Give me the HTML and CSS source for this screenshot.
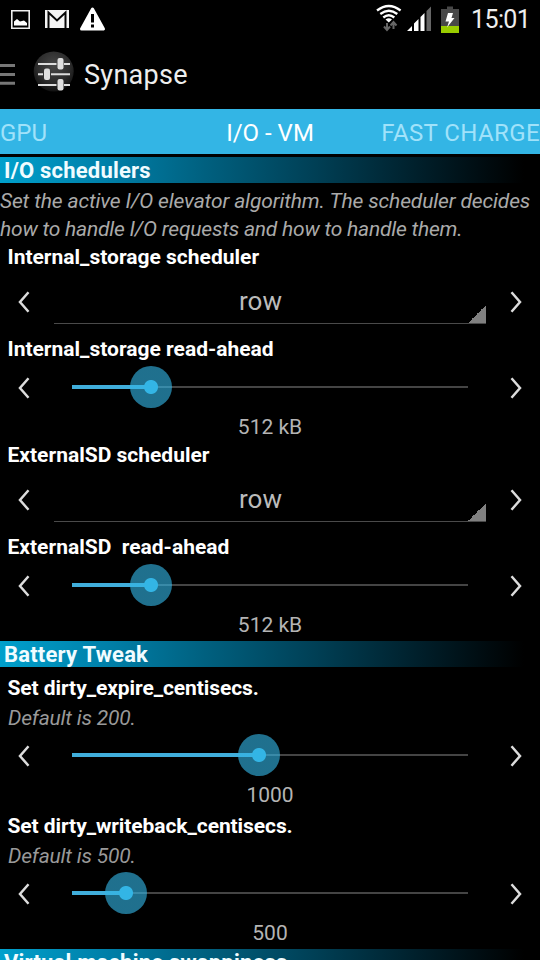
FILE: index.html
```
<!DOCTYPE html>
<html lang="en">
<head>
<meta charset="utf-8">
<title>Synapse</title>
<link rel="stylesheet" href="styles.css">
</head>
<body>
<svg class="defs" width="0" height="0">
  <symbol id="left" viewBox="0 0 12 22"><path d="M10.500 1.300 2 11 10.500 20.700" fill="none" stroke="#dcdcdc" stroke-width="2.500"/></symbol>
  <symbol id="right" viewBox="0 0 12 22"><path d="M1.500 1.300 10 11 1.500 20.700" fill="none" stroke="#dcdcdc" stroke-width="2.500"/></symbol>
</svg>
<div class="screen">
  <div class="status">
    <svg width="110" height="38" viewBox="0 0 110 38">
      <path d="M11.800 10.800H29.200V28.200H11.800Z" fill="none" stroke="#eee" stroke-width="1.600"/>
      <path d="M14 25.500V21.500L17 19L20 21.500L24 20.500L27 23V25.500Z" fill="#fff"/>
      <path d="M45 10H69V28H45Z" fill="#f4f4f4"/>
      <path d="M48.500 28V12.500L57 20.500L65.500 12.500V28" fill="none" stroke="#050505" stroke-width="2"/>
      <path d="M92.500 9 103.500 29H81.500Z" fill="#fff" stroke="#fff" stroke-width="3" stroke-linejoin="round"/>
      <path d="M92.500 14V22.500M92.500 24.500V27.500" stroke="#000" stroke-width="3"/>
    </svg>
    <svg class="signals" width="90" height="38" viewBox="370 0 90 38">
      <g fill="none" stroke="#fff" stroke-width="2.300">
        <path d="M377 10.500Q388.800 1.500 400.600 10.500"/>
        <path d="M380.300 14Q388.800 7.500 397.300 14"/>
        <path d="M383.300 17.500Q388.800 13 394.300 17.500"/>
      </g>
      <path d="M385.500 19.500Q388.800 17 392 19.500L388.800 22.500Z" fill="#fff"/>
      <path d="M387 23V30M384 26.500 387 30 390 26.500M393.500 29V22M390.500 25.500 393.500 22 396.500 25.500" fill="none" stroke="#666" stroke-width="2"/>
      <path d="M407 31 412 26V31ZM414 31V23.500L418.500 19V31ZM420.500 31V17L424.500 13V31Z" fill="#fff"/>
      <path d="M426.500 31V11L431 6.500V31Z" fill="#666"/>
      <path d="M441 9H447V6.500H453V9H459V26H441Z" fill="#484848"/>
      <path d="M441 26H459V33H441Z" fill="#9c0"/>
      <path d="M448 13H453L451.500 18H454.500L447 27.500L449 21.500H445.500Z" fill="#fff"/>
    </svg>
    <span class="clock">15:01</span>
  </div>
  <div class="actionbar">
    <svg width="78" height="70" viewBox="0 38 78 70">
      <defs><radialGradient id="ball" cx=".5" cy=".35" r=".65"><stop offset="0" stop-color="#484848"/><stop offset=".65" stop-color="#2b2b2b"/><stop offset="1" stop-color="#111"/></radialGradient></defs>
      <path d="M0 65.500H15M0 74.500H15M0 83.300H15" stroke="#777" stroke-width="3"/>
      <circle cx="53.700" cy="71.500" r="20" fill="url(#ball)"/>
      <path d="M38 64H56.500M64 64H70M38 74.300H43M51 74.300H70M38 85H56.500M64 85H70" stroke="#ddd" stroke-width="2"/>
      <g fill="#dedede"><rect x="57.500" y="58" width="6" height="11.500" rx="2"/><rect x="44" y="68.500" width="6" height="11.500" rx="2"/><rect x="57.500" y="79" width="6" height="11.500" rx="2"/></g>
    </svg>
    <h1>Synapse</h1>
  </div>
  <nav class="tabs"><span class="t1">GPU</span><span class="t2">I/O - VM</span><span class="t3">FAST CHARGE</span></nav>

  <h2><span class="h-io">I/O schedulers</span></h2>
  <p class="desc"><span class="d1">Set the active I/O elevator algorithm. The scheduler decides</span><br><span class="d2">how to handle I/O requests and how to handle them.</span></p>

  <h3><span>Internal_storage scheduler</span></h3>
  <div class="row spin-row">
    <svg class="arrow"><use href="#left"/></svg>
    <div class="spinner"><span>row</span></div>
    <svg class="arrow"><use href="#right"/></svg>
  </div>
  <h3><span>Internal_storage read-ahead</span></h3>
  <div class="row">
    <svg class="arrow"><use href="#left"/></svg>
    <div class="track"><div class="fill" style="width:19.900%"><i class="thumb"></i></div></div>
    <svg class="arrow"><use href="#right"/></svg>
  </div>
  <div class="value">512 kB</div>

  <h3><span>ExternalSD scheduler</span></h3>
  <div class="row spin-row">
    <svg class="arrow"><use href="#left"/></svg>
    <div class="spinner"><span>row</span></div>
    <svg class="arrow"><use href="#right"/></svg>
  </div>
  <h3><span>ExternalSD&nbsp; read-ahead</span></h3>
  <div class="row">
    <svg class="arrow"><use href="#left"/></svg>
    <div class="track"><div class="fill" style="width:19.900%"><i class="thumb"></i></div></div>
    <svg class="arrow"><use href="#right"/></svg>
  </div>
  <div class="value">512 kB</div>

  <h2><span>Battery Tweak</span></h2>
  <section class="tweak first">
    <h3><span>Set dirty_expire_centisecs.</span></h3>
    <p class="default"><span>Default is 200.</span></p>
    <div class="row">
      <svg class="arrow"><use href="#left"/></svg>
      <div class="track"><div class="fill" style="width:47.300%"><i class="thumb"></i></div></div>
      <svg class="arrow"><use href="#right"/></svg>
    </div>
    <div class="value">1000</div>
  </section>
  <section class="tweak">
    <h3><span>Set dirty_writeback_centisecs.</span></h3>
    <p class="default"><span>Default is 500.</span></p>
    <div class="row">
      <svg class="arrow"><use href="#left"/></svg>
      <div class="track"><div class="fill" style="width:13.600%"><i class="thumb"></i></div></div>
      <svg class="arrow"><use href="#right"/></svg>
    </div>
    <div class="value">500</div>
  </section>
  <h2><span>Virtual machine swappiness</span></h2>
</div>
</body>
</html>
```
FILE: styles.css
```
* { box-sizing: border-box; margin: 0; padding: 0; }
body { background: #000; font-family: Roboto, "Liberation Sans", sans-serif; overflow: hidden; }
.defs { display: block; }
.screen { width: 540px; height: 960px; overflow: hidden; color: #b4b4b4; }
svg { flex: none; }
.status { height: 38px; display: flex; }
.signals { margin-left: 260px; }
.clock { margin-left: 11px; font-size: 25px; letter-spacing: -0.6px; line-height: 39px; color: #eee; white-space: nowrap; }
.actionbar { height: 71px; display: flex; }
h1 { margin-left: 6px; font-size: 27px; font-weight: 400; letter-spacing: 0.3px; line-height: 74px; color: #eee; }
.tabs { height: 45px; margin-bottom: 3px; background: #33b5e5; display: grid; grid-template-columns: 1fr auto 1fr; font-size: 24px; line-height: 48px; color: #a0e2fa; white-space: nowrap; }
.t2 { color: #fff; }
.t3 { text-align: right; letter-spacing: 0.4px; }
h2 { height: 26px; padding-left: 4px; margin-bottom: 4px; background: linear-gradient(90deg, #00a0cc 0%, #007fa8 20%, #00607f 38%, #004056 58%, #001b25 80%, #000 97%); color: #f0fcff; font-size: 22px; line-height: 27px; font-weight: 700; letter-spacing: 0.2px; white-space: nowrap; }
.desc { font-size: 21px; line-height: 28px; font-style: italic; white-space: nowrap; color: #aaa; }
.d1 { letter-spacing: -0.14px; }
.d2 { letter-spacing: -0.21px; }
h3 { height: 28px; padding-left: 7.500px; font-size: 21px; line-height: 28px; font-weight: 700; color: #fff; white-space: nowrap; }
.tweak h3 { letter-spacing: -0.08px; }
.row { height: 50px; display: flex; align-items: center; justify-content: space-between; padding: 0 18px; }
.arrow { width: 12px; height: 22px; }
.spin-row { height: 64px; padding-bottom: 3px; }
.spinner { width: 432px; height: 45px; margin: 0 6px; border-bottom: 1px solid #4a4a4a; font-size: 26px; line-height: 45px; text-align: center; padding-right: 19px; color: #bbb; background: linear-gradient(135deg, transparent 50%, #808080 50%) right bottom / 18px 18px no-repeat; }
.track { width: 396px; height: 2px; background: #444; margin-bottom: 2px; }
.fill { position: relative; height: 4px; top: -1px; background: #40aedb; }
.thumb { position: absolute; right: -21px; top: -19px; width: 42px; height: 42px; border-radius: 50%; background: radial-gradient(circle, #33b5e5 0 6.500px, rgba(51, 181, 229, 0.62) 7.500px); }
.value { height: 28px; font-size: 21px; line-height: 28px; text-align: center; color: #b4b4b4; }
.value + h2 { margin-top: 2px; }
.tweak { padding-top: 3px; }
.default { margin-top: 2px; padding-left: 8px; font-size: 21px; line-height: 28px; font-style: italic; letter-spacing: -0.2px; color: #999; }
.tweak .row { height: 49px; padding-bottom: 2px; }
.tweak + h2 { margin-top: 2px; }
```
